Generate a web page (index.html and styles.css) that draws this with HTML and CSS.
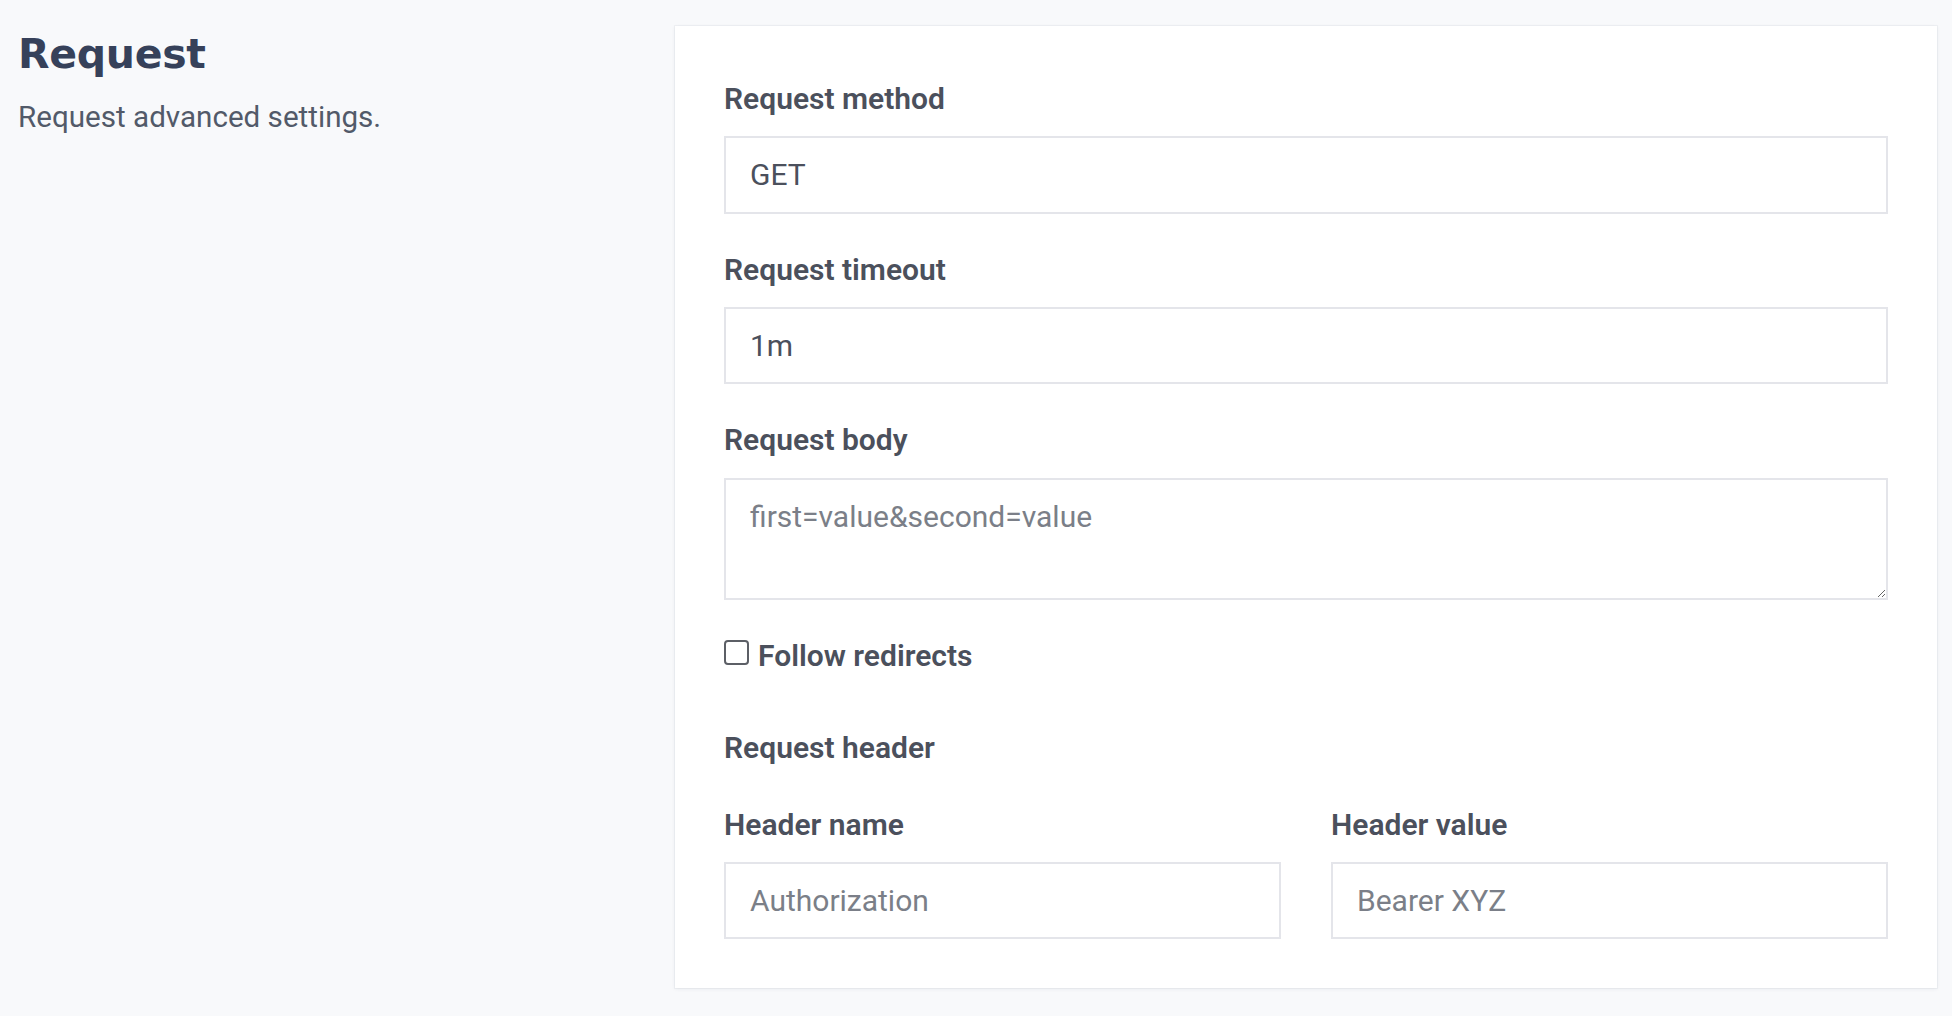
FILE: index.html
```html
<!DOCTYPE html>
<html lang="en">
<head>
<meta charset="utf-8">
<title>Request settings</title>
<link rel="stylesheet" href="styles.css">
</head>
<body>
<main class="page">
  <section class="intro">
    <h1 class="intro-title">Request</h1>
    <p class="intro-text">Request advanced settings.</p>
  </section>
  <section class="card">
    <div class="field">
      <label class="field-label" for="method">Request method</label>
      <input class="field-input" id="method" type="text" value="GET">
    </div>
    <div class="field">
      <label class="field-label" for="timeout">Request timeout</label>
      <input class="field-input" id="timeout" type="text" value="1m">
    </div>
    <div class="field">
      <label class="field-label" for="body">Request body</label>
      <textarea class="field-input field-textarea" id="body" placeholder="first=value&amp;second=value"></textarea>
    </div>
    <div class="field check-row">
      <input class="check-box" id="redirects" type="checkbox">
      <label class="check-label" for="redirects">Follow redirects</label>
    </div>
    <h2 class="group-title">Request header</h2>
    <div class="header-grid">
      <div class="field field-last">
        <label class="field-label" for="hname">Header name</label>
        <input class="field-input" id="hname" type="text" placeholder="Authorization">
      </div>
      <div class="field field-last">
        <label class="field-label" for="hvalue">Header value</label>
        <input class="field-input" id="hvalue" type="text" placeholder="Bearer XYZ">
      </div>
    </div>
  </section>
</main>
</body>
</html>
```
FILE: styles.css
```css
* {
  box-sizing: border-box;
}

html,
body {
  margin: 0;
  padding: 0;
  background: #f8f9fb;
}

body {
  font-family: Roboto, "Liberation Sans", sans-serif;
  color: #4b505c;
}

.page {
  display: grid;
  grid-template-columns: repeat(3, 1fr);
  column-gap: 48px;
  padding: 26px 15px 28px 20px;
  align-items: start;
}

.intro {
  grid-column: 1 / 2;
  margin-left: -2px;
}

.intro-title {
  margin: 4px 0 0 0;
  font-family: "DejaVu Sans", sans-serif;
  font-weight: 700;
  font-size: 41px;
  line-height: 48px;
  color: #36415a;
  letter-spacing: -0.3px;
}

.intro-text {
  margin: 14.7px 0 0 0;
  font-size: 29.6px;
  line-height: 48px;
  color: #525a69;
}

.card {
  grid-column: 2 / 4;
  background: #ffffff;
  padding: 49px 49px 48.5px 49px;
  box-shadow: 0 0 0 1px rgba(30, 40, 70, 0.04), 0 1px 4px rgba(30, 40, 70, 0.07);
}

.field {
  margin-bottom: 32px;
}

.field-last {
  margin-bottom: 0;
}

.field-label {
  display: block;
  font-size: 30px;
  font-weight: 600;
  line-height: 48px;
  color: #4b505c;
  margin-bottom: 13.2px;
}

.field-input {
  display: block;
  width: 100%;
  height: 77.5px;
  padding: 0 24px;
  border: 2px solid #e4e5ea;
  border-radius: 0;
  background: #ffffff;
  font-family: Roboto, "Liberation Sans", sans-serif;
  font-size: 30px;
  color: #4b505c;
  outline: none;
}

.field-input::placeholder {
  color: #7b7f88;
  opacity: 1;
}

.field-textarea {
  height: 122px;
  padding: 14.7px 24px;
  line-height: 45px;
  resize: vertical;
}

.check-row {
  display: flex;
  align-items: flex-start;
  margin-bottom: 44px;
}

.check-box {
  appearance: none;
  -webkit-appearance: none;
  width: 25px;
  height: 25px;
  margin: 8.3px 9px 0 0;
  border: 2px solid #5c5f66;
  border-radius: 4px;
  background: #ffffff;
  flex: none;
}

.check-label {
  font-size: 30px;
  font-weight: 600;
  line-height: 48px;
  color: #4b505c;
}

.group-title {
  margin: 0 0 29px 0;
  font-size: 30px;
  font-weight: 600;
  line-height: 48px;
  color: #4b505c;
}

.header-grid {
  display: grid;
  grid-template-columns: 1fr 1fr;
  column-gap: 50px;
}
```
